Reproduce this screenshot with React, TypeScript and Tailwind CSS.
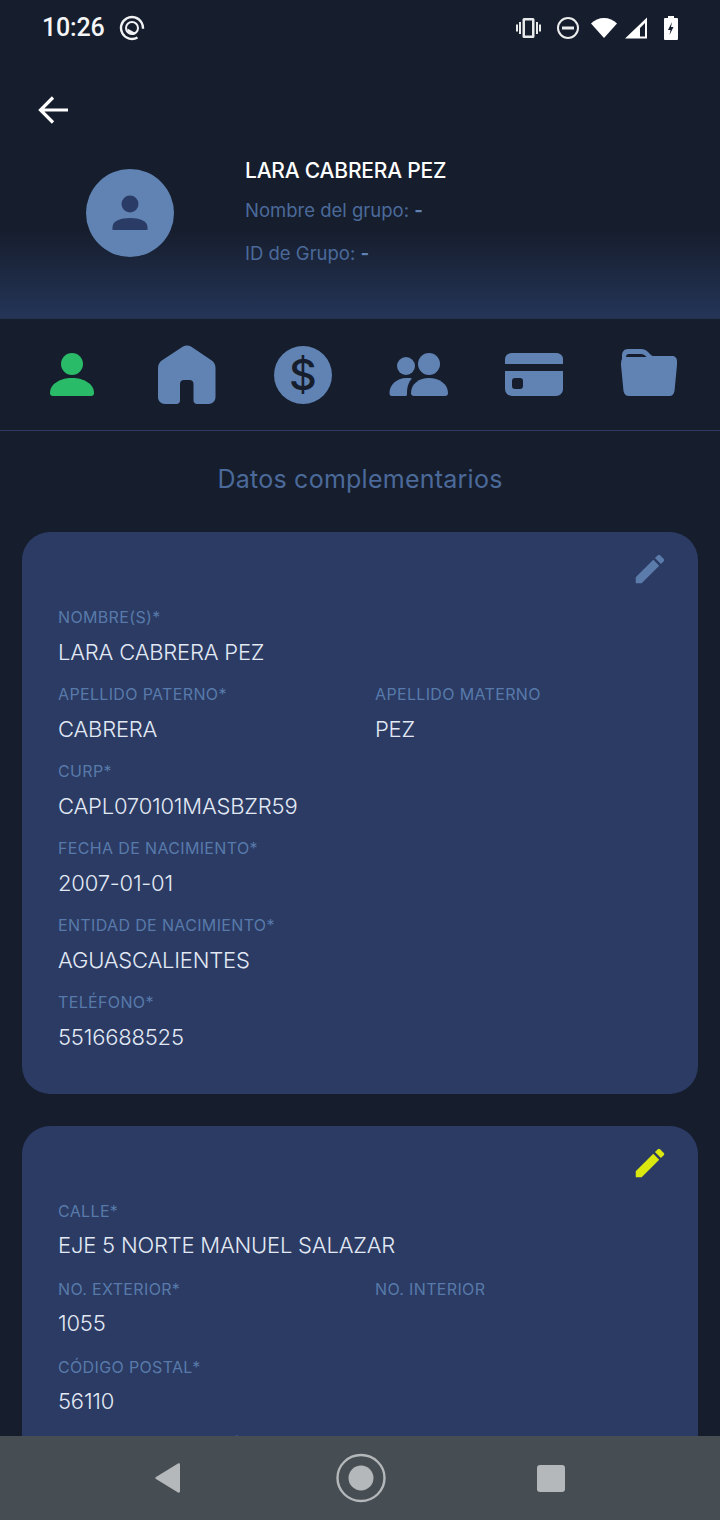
const font = { fontFamily: "Inter, 'Noto Sans', sans-serif" };

function Field({ label, value, tall = false }: { label: string; value?: string; tall?: boolean }) {
  return (
    <div className={`flex flex-col ${tall ? "h-[78px]" : "h-[77px]"}`}>
      <div className={`pt-[1px] text-[16px] leading-[24px] tracking-[0.35px] text-[#587aaa] ${tall ? "h-[30px]" : "h-[31px]"}`}>{label}</div>
      <div className="h-[34px] text-[22px] font-light leading-[34px] tracking-[-0.2px] text-[#e2e9f4]">{value}</div>
    </div>
  );
}

function Pencil({ color }: { color: string }) {
  return (
    <svg width="38" height="38" viewBox="0 0 24 24" fill={color}>
      <path d="M3 17.25V21h3.75L17.81 9.94l-3.75-3.75L3 17.25zM20.71 7.04a1 1 0 0 0 0-1.41l-2.34-2.34a1 1 0 0 0-1.41 0l-1.83 1.83 3.75 3.75 1.83-1.83z" />
    </svg>
  );
}

function Card({ pencil, children }: { pencil: string; children: React.ReactNode }) {
  return (
    <div className="shrink-0 rounded-[28px] bg-[#2b3b64] pl-[36px] pr-[18px]">
      <div className="flex h-[72px] items-start justify-end pt-[18px]">
        <div className="mr-[11px]">
          <Pencil color={pencil} />
        </div>
      </div>
      {children}
    </div>
  );
}

const tabBlue = "#6083b3";

function Tab({ children }: { children: React.ReactNode }) {
  return <div className="flex items-center justify-center">{children}</div>;
}

export default function App() {
  return (
    <div className="flex h-[1520px] w-[720px] flex-col overflow-hidden bg-[#161d2d]" style={font}>
      <div className="flex h-[318px] shrink-0 flex-col bg-gradient-to-b from-[#161d2d] from-[72%] to-[#243558]">
        <div className="flex h-[56px] items-center pl-[42px] pr-[42px]">
          <span className="text-[25px] font-medium tracking-[-0.2px] text-[#f4f5f6]" style={{ fontFamily: "Roboto, sans-serif" }}>10:26</span>
          <svg className="ml-[15px]" width="26" height="26" viewBox="0 0 26 26" fill="none">
            <circle cx="13" cy="13" r="11" stroke="#f1f2f3" strokeWidth="2.4" strokeDasharray="58 11" transform="rotate(60 13 13)" />
            <circle cx="13" cy="13" r="6" stroke="#f1f2f3" strokeWidth="2" />
            <path d="M8.500 13.500l9 5-3 1.500-4-1-2-3z" fill="#f1f2f3" />
          </svg>
          <div className="ml-auto flex items-center">
            <svg width="25" height="26" viewBox="0 0 25 26" fill="#e8e9ea">
              <path d="M8 3h9a1.500 1.500 0 0 1 1.500 1.500v17A1.500 1.500 0 0 1 17 23H8a1.500 1.500 0 0 1-1.500-1.500v-17A1.500 1.500 0 0 1 8 3zm1 2.500v15h7v-15H9z" fillRule="evenodd" />
              <rect x="3" y="7" width="2" height="12" />
              <rect x="20" y="7" width="2" height="12" />
              <rect x="0" y="9.500" width="2" height="7" />
              <rect x="23" y="9.500" width="2" height="7" />
            </svg>
            <svg className="ml-[16px]" width="22" height="22" viewBox="0 0 22 22" fill="none">
              <circle cx="11" cy="11" r="10" stroke="#ebecec" strokeWidth="2" />
              <rect x="5" y="9.500" width="12" height="3" fill="#ebecec" />
            </svg>
            <svg className="ml-[12px]" width="26" height="22" viewBox="0 0 26 22" fill="#fff">
              <path d="M13 21L0 6.500C3.500 3 8 1 13 1s9.500 2 13 5.500L13 21z" />
            </svg>
            <svg className="ml-[8px]" width="22" height="22" viewBox="0 0 22 22">
              <path d="M0 21.500L22 .5v21H0zm15-2h5V6l-5 5v8.500z" fill="#fff" fillRule="evenodd" />
            </svg>
            <svg className="ml-[17px]" width="14" height="24" viewBox="0 0 14 24">
              <path d="M4 0h6v2h3a1 1 0 0 1 1 1v20a1 1 0 0 1-1 1H1a1 1 0 0 1-1-1V3a1 1 0 0 1 1-1h3V0z" fill="#fff" />
              <path d="M8 6l-4 8h2.500l-1 5 4-8H7l1-5z" fill="#161d2d" />
            </svg>
          </div>
        </div>
        <div className="mt-[16px] flex h-[76px] items-center pl-[36px]">
          <svg width="34" height="34" viewBox="0 0 34 34" fill="none" stroke="#fff" strokeWidth="3.2">
            <path d="M32 17H5M17 4.500L4.500 17 17 29.500" />
          </svg>
        </div>
        <div className="flex pl-[86px]">
          <div className="mt-[21px] flex h-[88px] w-[88px] items-center justify-center rounded-full bg-[#6083b3]">
            <svg width="36" height="36" viewBox="0 0 36 36" fill="#2a3c66">
              <circle cx="18" cy="9" r="8.500" />
              <path d="M.5 35v-3c0-6 8-9 17.500-9s17.500 3 17.500 9v3H.5z" />
            </svg>
          </div>
          <div className="ml-[71px] mt-[11px] flex flex-col">
            <div className="h-[24px] text-[21px] font-medium leading-[24px] tracking-[-0.2px] text-white">LARA CABRERA PEZ</div>
            <div className="mt-[15px] h-[24px] text-[18.500px] leading-[24px] tracking-[0px] text-[#4b6a9a]">
              Nombre del grupo: <span className="font-bold text-[#6083b3]">-</span>
            </div>
            <div className="mt-[19px] h-[24px] text-[18.500px] leading-[24px] tracking-[0px] text-[#4b6a9a]">
              ID de Grupo: <span className="font-bold text-[#6083b3]">-</span>
            </div>
          </div>
        </div>
      </div>

      <div className="grid h-[113px] shrink-0 grid-cols-6 border-b border-t border-b-[#2b3b64] border-t-[#232f4c] pl-[14px] pr-[13px]">
        <Tab>
          <svg width="60" height="60" viewBox="0 0 60 60" fill="#2abb68">
            <circle cx="30" cy="19" r="11" />
            <path d="M8 48c0-9 10-15 22-15s22 6 22 15c0 2-1 3-3 3H11c-2 0-3-1-3-3z" />
          </svg>
        </Tab>
        <Tab>
          <svg width="60" height="60" viewBox="0 0 60 60" fill={tabBlue}>
            <path d="M26 1.500c2.500-1.500 5.500-1.500 8 0L54 15c3 2 4.500 4.500 4.500 8v29c0 4-3 7-7 7H40c-2 0-3.500-1.500-3.500-3.500V39c0-2.500-1.500-4-4-4H27c-2.500 0-4 1.500-4 4v16.500c0 2-1.500 3.500-3.500 3.500H8c-4 0-7-3-7-7V23c0-3.500 1.500-6 4.500-8L26 1.500z" />
          </svg>
        </Tab>
        <Tab>
          <svg width="60" height="60" viewBox="0 0 60 60">
            <circle cx="30" cy="30" r="29" fill={tabBlue} />
            <text x="30" y="45" textAnchor="middle" fontSize="43" fontWeight="500" fill="#161d2d" style={{ fontFamily: "Inter, sans-serif" }}>$</text>
          </svg>
        </Tab>
        <Tab>
          <svg width="60" height="60" viewBox="0 0 60 60" fill={tabBlue}>
            <circle cx="18" cy="21" r="9" />
            <circle cx="41" cy="19" r="11" />
            <path d="M1.500 48c0-8 7-15 17-15 2 0 4 0 5.500.5-3 3-5 8-5 14.500 0 1 0 3-1 3H4c-2 0-2.500-1-2.500-3z" />
            <path d="M23 48c0-9 8-15 18-15s19 6 19 15c0 2-1 3-3 3H26c-2 0-3-1-3-3z" />
          </svg>
        </Tab>
        <Tab>
          <svg width="60" height="60" viewBox="0 0 60 60" fill={tabBlue}>
            <path d="M8 8h44c4 0 7 2.500 7 6v5H1v-5c0-3.500 3-6 7-6z" />
            <path fillRule="evenodd" d="M1 26h58v18c0 4-3 7-7 7H8c-4 0-7-3-7-7V26zm10 7a3 3 0 0 0-3 3v5a3 3 0 0 0 3 3h5a3 3 0 0 0 3-3v-5a3 3 0 0 0-3-3h-5z" />
          </svg>
        </Tab>
        <Tab>
          <svg width="60" height="60" viewBox="0 0 60 60" fill={tabBlue}>
            <path fillRule="evenodd" d="M3 14v-4c0-3 2-6 6-6h13c3 0 5 1 7 3l3 3c1 1 2 1 3 1h18c3 0 5 2 5 5v4l-2.500 26c-.5 3-2.500 5-5 5H10c-3 0-5-2-5.500-5L2 20c0-2 0-4 1-6zm4-2h20.500C26 10 24 9 22 9H10c-2 0-3 1-3 3z" />
          </svg>
        </Tab>
      </div>

      <div className="flex min-h-0 flex-1 flex-col gap-[32px] overflow-hidden px-[22px]">
        <div className="-mb-[32px] h-[101px] shrink-0 pt-[30px] text-center text-[25px] leading-[36px] tracking-[0.25px] text-[#4b6a9a]">
          Datos complementarios
        </div>
        <Card pencil="#5b7cab">
          <Field label="NOMBRE(S)*" value="LARA CABRERA PEZ" />
          <div className="grid grid-cols-[317px_1fr]">
            <Field label="APELLIDO PATERNO*" value="CABRERA" />
            <Field label="APELLIDO MATERNO" value="PEZ" />
          </div>
          <Field label="CURP*" value="CAPL070101MASBZR59" />
          <Field label="FECHA DE NACIMIENTO*" value="2007-01-01" />
          <Field label="ENTIDAD DE NACIMIENTO*" value="AGUASCALIENTES" />
          <Field label="TELÉFONO*" value="5516688525" />
          <div className="h-[28px]" />
        </Card>
        <Card pencil="#dbe80f">
          <Field tall label="CALLE*" value="EJE 5 NORTE MANUEL SALAZAR" />
          <div className="grid grid-cols-[317px_1fr]">
            <Field tall label="NO. EXTERIOR*" value="1055" />
            <Field tall label="NO. INTERIOR" />
          </div>
          <Field tall label="CÓDIGO POSTAL*" value="56110" />
          <Field tall label="MUNICIPIO O ALCALDÍA*" />
        </Card>
      </div>

      <div className="flex h-[84px] shrink-0 items-center bg-[#464d53] pl-[155px]">
        <svg width="25" height="30" viewBox="0 0 25 30" fill="#b4b8ba">
          <path d="M25 1.500V28.500c0 1-1 1.500-2 1L1 16c-1-.6-1-1.500 0-2L23 .5c1-.5 2 0 2 1z" />
        </svg>
        <svg className="ml-[156px]" width="50" height="50" viewBox="0 0 50 50" fill="none">
          <ellipse cx="25" cy="25" rx="23.500" ry="23" stroke="#b4b8ba" strokeWidth="2.400" />
          <circle cx="25" cy="25" r="12.500" fill="#b4b8ba" />
        </svg>
        <div className="ml-[151px] h-[27px] w-[28px] rounded-[3px] bg-[#b4b8ba]" />
      </div>
    </div>
  );
}
